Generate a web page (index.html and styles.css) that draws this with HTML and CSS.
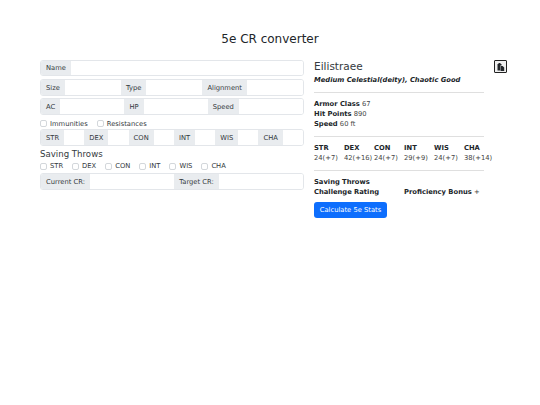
FILE: index.html
```html
<!DOCTYPE html>
<html lang="en">
<head>
    <meta charset="UTF-8">
    <title>5e CR converter</title>
    <link rel="stylesheet" href="styles.css">
</head>
<body>
    <h1 class="page-title">5e CR converter</h1>
    <div class="main-container">
        <!-- Input form -->
        <form class="left-col">
            <div class="input-group name-row">
                <span class="addon">Name</span><input type="text">
            </div>
            <div class="input-group">
                <span class="addon">Size</span><input type="text">
                <span class="addon">Type</span><input type="text">
                <span class="addon">Alignment</span><input type="text">
            </div>
            <div class="input-group">
                <span class="addon">AC</span><input type="text">
                <span class="addon">HP</span><input type="text">
                <span class="addon">Speed</span><input type="text">
            </div>
            <div class="check-row defenses">
                <label><input type="checkbox">Immunities</label>
                <label><input type="checkbox">Resistances</label>
            </div>
            <div class="input-group stats-row">
                <span class="addon">STR</span><input type="text">
                <span class="addon">DEX</span><input type="text">
                <span class="addon">CON</span><input type="text">
                <span class="addon">INT</span><input type="text">
                <span class="addon">WIS</span><input type="text">
                <span class="addon">CHA</span><input type="text">
            </div>
            <div class="saving-title">Saving Throws</div>
            <div class="check-row saves">
                <label><input type="checkbox">STR</label>
                <label><input type="checkbox">DEX</label>
                <label><input type="checkbox">CON</label>
                <label><input type="checkbox">INT</label>
                <label><input type="checkbox">WIS</label>
                <label><input type="checkbox">CHA</label>
            </div>
            <div class="input-group">
                <span class="addon">Current CR:</span><input type="text">
                <span class="addon">Target CR:</span><input type="text">
            </div>
        </form>

        <!-- Stat block -->
        <div class="stat-block">
            <div class="stat-name">Eilistraee</div>
            <div class="stat-meta">Medium Celestial(deity), Chaotic Good</div>
            <hr>
            <div class="stat-line"><b>Armor Class</b> 67</div>
            <div class="stat-line"><b>Hit Points</b> 890</div>
            <div class="stat-line"><b>Speed</b> 60 ft</div>
            <hr>
            <div class="ability-grid">
                <b>STR</b><b>DEX</b><b>CON</b><b>INT</b><b>WIS</b><b>CHA</b>
                <span>24(+7)</span><span>42(+16)</span><span>24(+7)</span><span>29(+9)</span><span>24(+7)</span><span>38(+14)</span>
            </div>
            <hr>
            <div class="stat-line"><b>Saving Throws</b></div>
            <div class="stat-line cr-line"><b>Challenge Rating</b><span><b>Proficiency Bonus</b> +</span></div>
            <button type="button" class="btn-calc">Calculate 5e Stats</button>
        </div>

        <button type="button" class="copy-btn" aria-label="Copy">
            <svg width="8" height="8" viewBox="0 0 8 8"><path d="M0.5 1h1v-1h2v1h1v1.5h-1.2v5h-2.8z" fill="#212529"/><path d="M3.6 3h2l1.6 1.6v3.4h-3.6z" fill="#212529"/></svg>
        </button>
    </div>
</body>
</html>
```

FILE: styles.css
```css
* {
    margin: 0;
    padding: 0;
    box-sizing: border-box;
}

body {
    font-family: 'DejaVu Sans', sans-serif;
    font-size: 6.75px;
    line-height: 10px;
    color: #212529;
    background: #fff;
}

.page-title { font-size: 12px; line-height: 16px; font-weight: 400; text-align: center; padding-top: 31px; margin-bottom: 13px; }
.main-container { display: flex; padding-left: 40px; align-items: flex-start; }

/* form */
.left-col { width: 264px; display: flex; flex-direction: column; }
.input-group { display: flex; height: 17px; border: 1px solid #e3e6ea; border-radius: 3px; overflow: hidden; margin-bottom: 2px; }
.name-row { height: 16px; margin-bottom: 3px; }
.input-group input { flex: 1 1 0; min-width: 0; border: none; background: #fff; outline: none; }
.addon { display: flex; align-items: center; padding: 0 5px; background: #e9ecef; color: #343a40; white-space: nowrap; }
.check-row { display: flex; color: #343a40; }
.check-row label { display: flex; align-items: center; }
.check-row input { appearance: none; width: 7px; height: 7px; border: 1px solid #d3d7db; border-radius: 2px; margin-right: 3px; background: #fff; }
.defenses { gap: 9px; height: 11px; margin-top: 1px; margin-bottom: 0; }
.saves { gap: 9px; height: 10px; margin-bottom: 2px; }
.saving-title { font-size: 8.6px; line-height: 12px; margin-top: 0; margin-bottom: 1px; color: #343a40; }

/* stat block */
.stat-block { width: 170px; margin-left: 10px; }
.stat-name { font-size: 10.5px; line-height: 12px; color: #343a40; }
.stat-meta { font-weight: 700; font-style: italic; line-height: 10px; margin-top: 3px; }
hr { border: none; border-top: 1px solid #dfdfdf; margin: 7px 0 6px; }
.stat-line { line-height: 10px; color: #444; }
.stat-line b { color: #212529; }
.cr-line { display: grid; grid-template-columns: 90px 100px; white-space: nowrap; }
.ability-grid { display: grid; grid-template-columns: repeat(6, 30px); line-height: 10px; white-space: nowrap; color: #444; }
.ability-grid b { color: #212529; }
.btn-calc { display: block; width: 73px; height: 16px; margin-top: 5px; border: none; border-radius: 3px; background: #0d6efd; color: #fff; font-family: inherit; font-size: 6.75px; }
.copy-btn { display: flex; align-items: center; justify-content: center; width: 13px; height: 13px; margin-left: 10px; background: #efefef; border: 1px solid #222; border-radius: 1px; }
```
